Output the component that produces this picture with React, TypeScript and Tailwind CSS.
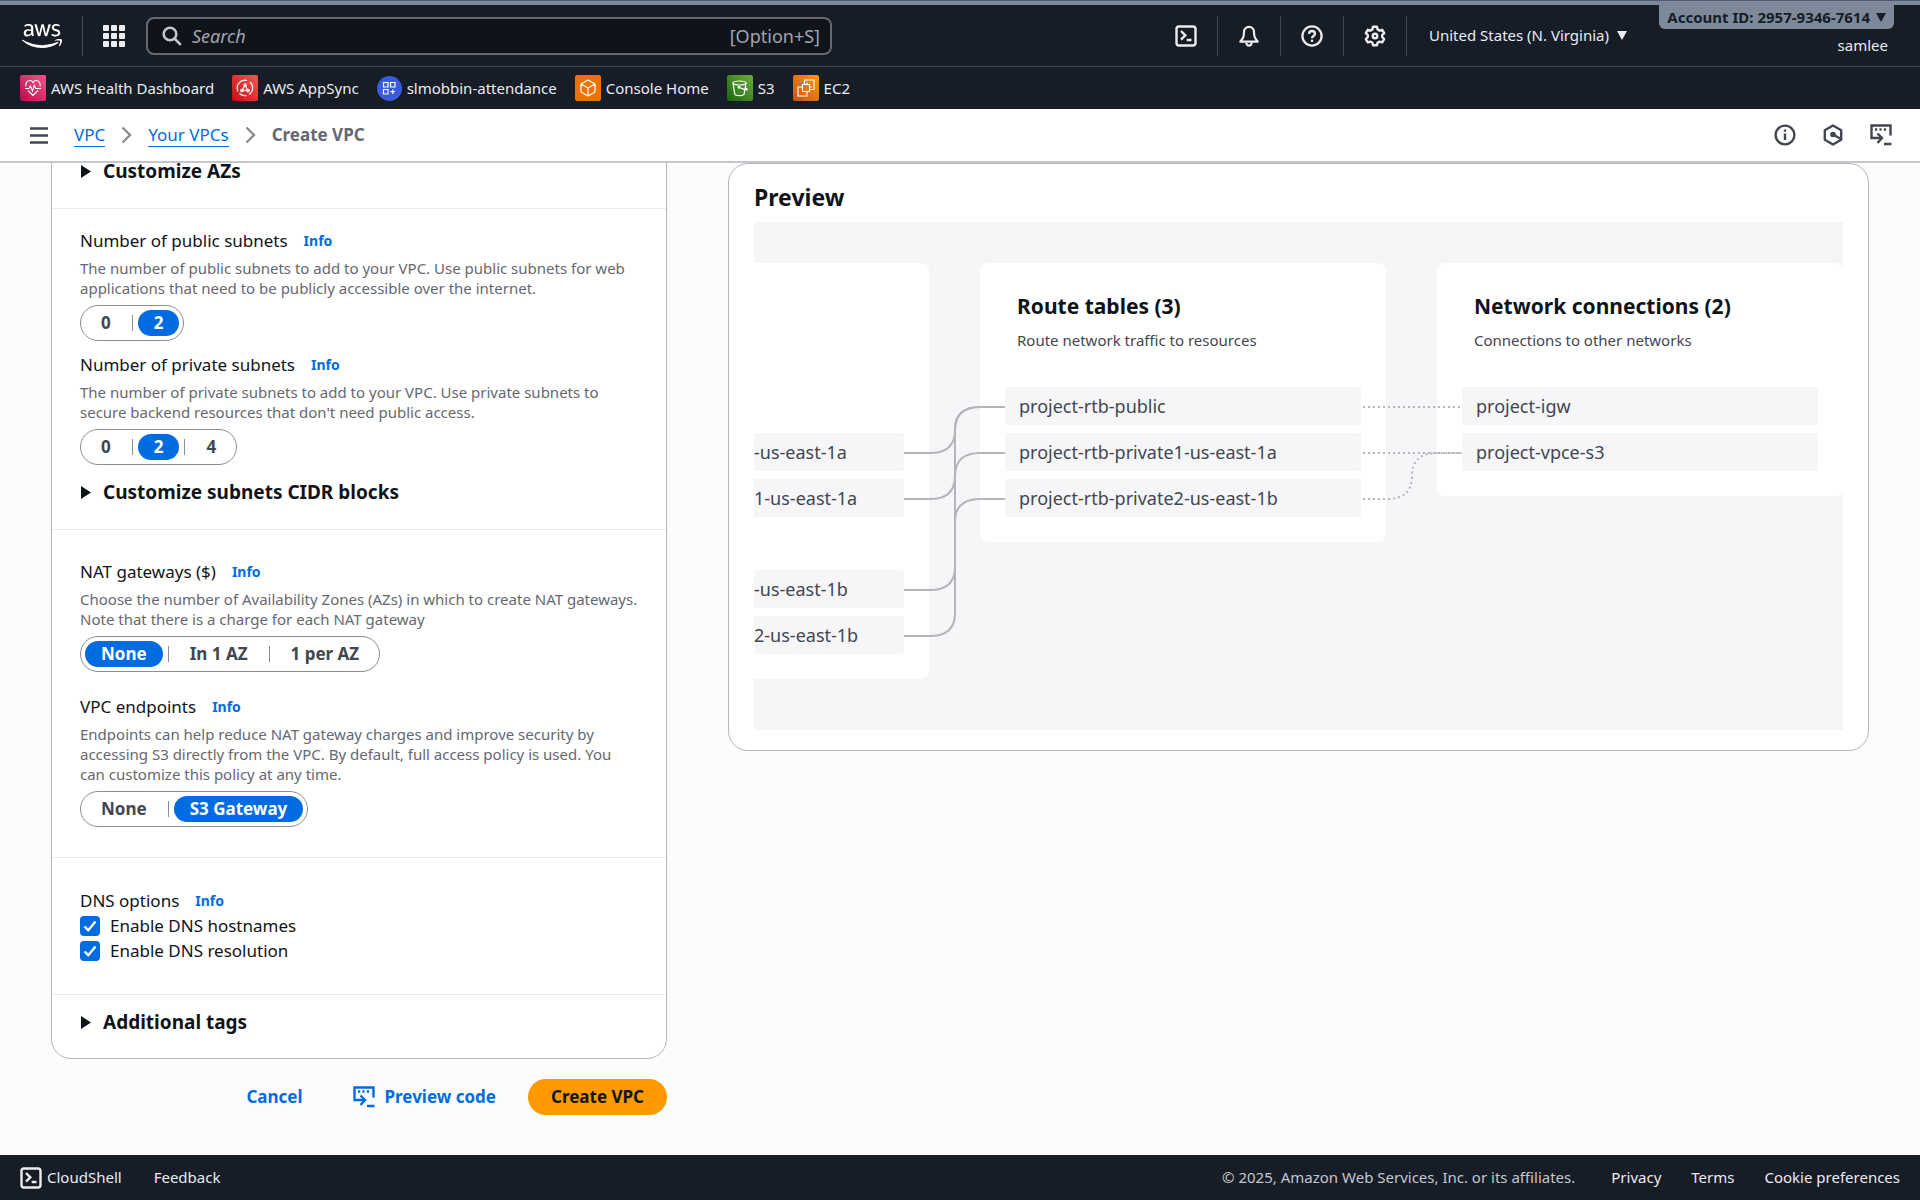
import type { ReactNode } from 'react';
import { FaAws } from 'react-icons/fa';

const favorites = [
  { name: 'AWS Health Dashboard', icon: <HealthIcon /> },
  { name: 'AWS AppSync', icon: <AppSyncIcon /> },
  { name: 'slmobbin-attendance', icon: <ApplicationIcon /> },
  { name: 'Console Home', icon: <ConsoleHomeIcon /> },
  { name: 'S3', icon: <S3Icon /> },
  { name: 'EC2', icon: <Ec2Icon /> },
];

function HealthIcon() {
  return (
    <span className="flex h-[26px] w-[26px] items-center justify-center rounded-xs bg-linear-to-tr from-[#b0084d] to-[#ff4f8b]">
      <svg width="20" height="20" viewBox="0 0 20 20" fill="none" stroke="#fff" strokeWidth="1.1" aria-hidden="true">
        <path d="M3 8.5C2 5 4.5 2.5 7 2.5c1.4 0 2.4.8 3 2 .6-1.2 1.6-2 3-2 2.5 0 5 2.5 4 6M5 12.5l5 5 5-5" />
        <path d="M2 10.5h4l1.5-2.5 2 5 1.8-6 1.5 3.5H18" />
      </svg>
    </span>
  );
}

function AppSyncIcon() {
  return (
    <span className="flex h-[26px] w-[26px] items-center justify-center rounded-xs bg-linear-to-tr from-[#bd0816] to-[#ff5252]">
      <svg width="20" height="20" viewBox="0 0 20 20" fill="none" stroke="#fff" strokeWidth="1.1" aria-hidden="true">
        <path d="M3 13.5A7.8 7.8 0 0 1 12 2.5M15 4a7.8 7.8 0 0 1-1 12.5M11.5 17.6A7.8 7.8 0 0 1 4.5 15.5" />
        <path d="M10 7.5l-3 4.7h6z" />
        <circle cx="10" cy="7" r="1.3" />
        <circle cx="7" cy="12.5" r="1.3" />
        <circle cx="13" cy="12.5" r="1.3" />
      </svg>
    </span>
  );
}

function ApplicationIcon() {
  return (
    <span className="flex h-[25px] w-[25px] items-center justify-center rounded-full bg-[#3b5bdf]">
      <svg width="15" height="15" viewBox="0 0 15 15" fill="none" stroke="#fff" strokeWidth="1.2" aria-hidden="true">
        <path d="M1.5 1.5h4.5v4.5H1.5zM8.5 1.5H13v4.5H8.5zM1.5 8.5h4.5V13H1.5zM10.7 8.5V13M8.5 10.7H13" />
      </svg>
    </span>
  );
}

function ConsoleHomeIcon() {
  return (
    <span className="flex h-[26px] w-[26px] items-center justify-center rounded-xs bg-[#ed7100]">
      <svg width="20" height="20" viewBox="0 0 20 20" fill="none" stroke="#fff" strokeWidth="1.2" strokeLinejoin="round" aria-hidden="true">
        <path d="M10 2l7 4v8l-7 4-7-4V6zM3 6l7 4 7-4M10 10v8" />
      </svg>
    </span>
  );
}

function S3Icon() {
  return (
    <span className="flex h-[26px] w-[26px] items-center justify-center rounded-xs bg-linear-to-tr from-[#1b660f] to-[#6cae3e]">
      <svg width="20" height="20" viewBox="0 0 20 20" fill="none" stroke="#fff" strokeWidth="1.2" aria-hidden="true">
        <ellipse cx="9.5" cy="5" rx="6.5" ry="2" />
        <path d="M3 5l1.8 11.2c.3 1 2.5 1.5 4.7 1.5s4.3-.5 4.6-1.5L16 5M9.5 9.5c3 1.5 5.5 2.2 7.5 2.2.8 0 .3-1-1.6-1.9" />
        <circle cx="9" cy="9.3" r=".8" />
      </svg>
    </span>
  );
}

function Ec2Icon() {
  return (
    <span className="flex h-[26px] w-[26px] items-center justify-center rounded-xs bg-linear-to-tr from-[#c8511b] to-[#ff9900]">
      <svg width="20" height="20" viewBox="0 0 20 20" fill="none" stroke="#fff" strokeWidth="1.1" aria-hidden="true">
        <path d="M6.5 6.5h7v7h-7zM8.5 6.5V2h9.5v9.5h-4.5M6 9H2v9h9v-4M11 4.5v2M13.5 9h2M6.5 9h-2M11 13.5v2" />
      </svg>
    </span>
  );
}

function CloudShellIcon() {
  return (
    <svg width="22" height="22" viewBox="0 0 22 22" fill="none" stroke="currentColor" strokeWidth="2.4" aria-hidden="true">
      <rect x="1.5" y="1.5" width="19" height="19" rx="2.5" />
      <path d="M6 6l4.300 4.300L6 14.600M11.700 15H16.500" />
    </svg>
  );
}

function BellIcon() {
  return (
    <svg width="22" height="22" viewBox="0 0 22 22" fill="none" stroke="currentColor" strokeWidth="2.2" strokeLinejoin="round" aria-hidden="true">
      <path d="M11 1.800a5 5 0 0 1 5 5c0 5.200 1 6.200 3.700 9.900H2.300C5 13 6 12 6 6.800a5 5 0 0 1 5-5z" />
      <path d="M8.300 17.500a2.700 3.200 0 0 0 5.400 0" />
    </svg>
  );
}

function HelpIcon() {
  return (
    <svg width="22" height="22" viewBox="0 0 22 22" fill="none" stroke="currentColor" strokeWidth="2.3" aria-hidden="true">
      <circle cx="11" cy="11" r="9.6" />
      <path d="M8 8.800A3 3 0 0 1 11 6c1.700 0 3 1.100 3 2.700C14 11 11 11 11 13.300" />
      <path d="M11 14.700v2.300" />
    </svg>
  );
}

function GearIcon() {
  return (
    <svg width="22" height="22" viewBox="0 0 22 22" fill="none" stroke="currentColor" strokeWidth="2.4" strokeLinejoin="round" aria-hidden="true">
      <path d="M9 1.800h4l.6 2.600 2 1.200 2.600-.8 2 3.400-2 1.900v2l2 1.900-2 3.400-2.600-.8-2 1.200-.6 2.500H9l-.6-2.500-2-1.200-2.600.8-2-3.400 2-1.900v-2l-2-1.900 2-3.400 2.600.8 2-1.200z" />
      <circle cx="11" cy="11" r="2.3" />
    </svg>
  );
}

function InfoIcon() {
  return (
    <svg width="22" height="22" viewBox="0 0 22 22" fill="none" stroke="currentColor" strokeWidth="2.4" aria-hidden="true">
      <circle cx="11" cy="11" r="9.4" />
      <path d="M11 9.500v6.500M11 5.500v2.300" />
    </svg>
  );
}

function HexagonIcon() {
  return (
    <svg width="22" height="22" viewBox="0 0 22 22" fill="none" stroke="currentColor" strokeWidth="2.4" strokeLinejoin="round" aria-hidden="true">
      <path d="M11 1.500l8.200 4.700v9.600L11 20.500l-8.200-4.700V6.200z" />
      <circle cx="11" cy="10.5" r="2.8" fill="currentColor" stroke="none" />
      <path d="M11 10.500l8 4.500" />
    </svg>
  );
}

function CodeIcon() {
  return (
    <svg width="22" height="22" viewBox="0 0 22 22" fill="none" stroke="currentColor" strokeWidth="2.4" aria-hidden="true">
      <path d="M20.500 11.500V1.500h-19V14H11M5 5.500h2.200M9.400 5.500h2.200M13.800 5.500h2.200" />
      <path d="M7.500 9.500L12 14l-4.500 5M14 20h7.500" />
    </svg>
  );
}

function SearchIcon() {
  return (
    <svg width="20" height="20" viewBox="0 0 20 20" fill="none" stroke="#c6c6cd" strokeWidth="2.6" aria-hidden="true">
      <circle cx="8" cy="8" r="6.3" />
      <path d="M12.500 12.500l6.300 6.300" />
    </svg>
  );
}

function Chevron() {
  return (
    <svg width="11" height="18" viewBox="0 0 11 18" fill="none" stroke="#8c8c94" strokeWidth="2.4" aria-hidden="true">
      <path d="M1.500 1.500L9 9l-7.500 7.500" />
    </svg>
  );
}

function CaretDown() {
  return (
    <svg width="10" height="9" viewBox="0 0 10 9" fill="currentColor" aria-hidden="true">
      <path d="M0 0h10L5 9z" />
    </svg>
  );
}

function Expander({ title }: { title: string }) {
  return (
    <button type="button" aria-expanded="false" className="flex items-center gap-3 text-[19px] leading-[30px] font-bold text-[#0f141a]">
      <svg width="11" height="13" viewBox="0 0 11 13" fill="currentColor" aria-hidden="true">
        <path d="M1 0l10 6.500L1 13z" />
      </svg>
      {title}
    </button>
  );
}

function FieldTitle({ title }: { title: string }) {
  return (
    <div className="flex items-center gap-4">
      <span className="text-[17px] leading-6 text-[#0f141a]">{title}</span>
      <a href="#info" className="text-sm leading-6 font-bold text-[#006ce0]">Info</a>
    </div>
  );
}

function Field({ title, description, children }: { title: string; description: string; children: ReactNode }) {
  return (
    <div>
      <FieldTitle title={title} />
      <p className="-mr-3 pt-[5px] pb-[7px] text-[15px] leading-5 whitespace-pre-line text-[#656871]">{description}</p>
      {children}
    </div>
  );
}

function Segmented({ label, options, selected }: { label: string; options: string[]; selected: string }) {
  return (
    <div role="group" aria-label={label} className="flex h-9 w-fit items-center rounded-full border border-[#8c8c94] px-1">
      {options.map((option, i) => (
        <div key={option} className="flex items-center">
          {i > 0 && <span className="mx-[5px] h-4 w-px bg-[#8c8c94]" />}
          <button
            type="button"
            aria-pressed={option === selected}
            className={`h-[26px] rounded-full px-4 text-[17px] leading-[26px] font-bold ${
              option === selected ? 'bg-[#006ce0] text-white' : 'text-[#424650]'
            }`}
          >
            {option}
          </button>
        </div>
      ))}
    </div>
  );
}

function Checkbox({ label }: { label: string }) {
  return (
    <label className="flex items-center gap-2.5 text-[17px] leading-[25px] text-[#0f141a]">
      <span className="relative flex h-5 w-5">
        <input type="checkbox" defaultChecked className="h-5 w-5 appearance-none rounded-[4px] bg-[#006ce0]" />
        <svg className="pointer-events-none absolute inset-0" width="20" height="20" viewBox="0 0 20 20" fill="none" stroke="#fff" strokeWidth="2.4" aria-hidden="true">
          <path d="M4.500 10.500l3.700 3.700L15.500 5.500" />
        </svg>
      </span>
      {label}
    </label>
  );
}

function ResourceRow({ name }: { name: string }) {
  return <li className="h-[38px] rounded-xs bg-[#f6f6f9] px-3.5 text-lg leading-[38px] text-[#424650]">{name}</li>;
}

function ResourceCard({ title, description, resources }: { title: string; description: string; resources: string[] }) {
  return (
    <div className="w-[406px] shrink-0 rounded-lg bg-white px-[25px] pt-[29px] pb-[25px]">
      <div className="mb-[34px] px-3">
        <h3 className="text-[21px] leading-7 font-bold text-[#0f141a]">{title}</h3>
        <p className="mt-[7px] text-[15px] leading-[26px] text-[#424650]">{description}</p>
      </div>
      <ul className="space-y-2">
        {resources.map(name => (
          <ResourceRow key={name} name={name} />
        ))}
      </ul>
    </div>
  );
}

// Rows of the subnets column, cut off at the left edge of the scrolled preview
function SubnetRow({ name }: { name: string }) {
  return <li className="h-[38px] rounded-r-xs bg-[#f6f6f9] text-lg leading-[38px] text-[#424650]">{name}</li>;
}

function SubnetLinks() {
  return (
    <div className="relative w-[51px] shrink-0">
      <svg className="absolute top-0 -left-[25px]" width="101" height="400" viewBox="0 0 101 400" fill="none" stroke="#b4b4bb" strokeWidth="2" aria-hidden="true">
        <path d="M0 190H26Q51 190 51 167Q51 144 76 144H101" />
        <path d="M0 236H26Q51 236 51 213Q51 190 76 190H101" />
        <path d="M0 327H26Q51 327 51 304V167Q51 144 76 144H101" />
        <path d="M0 373H26Q51 373 51 350V259Q51 236 76 236H101" />
      </svg>
    </div>
  );
}

function NetworkLinks() {
  return (
    <div className="relative w-[51px] shrink-0">
      <svg className="absolute top-0 -left-[25px]" width="101" height="400" viewBox="0 0 101 400" fill="none" stroke="#b4b4bb" strokeWidth="2" strokeDasharray="2 3" aria-hidden="true">
        <path d="M2 144H101" />
        <path d="M2 190H101" />
        <path d="M2 236H26Q51 236 51 213Q51 190 76 190H101" />
      </svg>
    </div>
  );
}

function Header() {
  return (
    <header className="bg-[#161d26] text-[#ebebf0]">
      <div className="h-[5px] border-t border-[#4f5b6e] bg-[#7d8998]" />
      <div className="flex h-[62px] items-center border-b border-[#424650] pr-8">
        <a href="#home" aria-label="AWS" className="ml-[22px] text-white">
          <FaAws className="h-8 w-10" />
        </a>
        <span className="ml-5 h-10 w-px bg-[#424650]" />
        <button type="button" aria-label="Services" className="ml-5">
          <svg width="22" height="22" viewBox="0 0 22 22" fill="currentColor" aria-hidden="true">
            {[0, 8, 16].map(y => [0, 8, 16].map(x => <rect key={`${x}-${y}`} x={x} y={y} width="6" height="6" rx="1" />))}
          </svg>
        </button>
        <div className="ml-[21px] flex h-[38px] w-[686px] items-center rounded-lg border-2 border-[#656871] bg-[#0f141a] px-3.5">
          <SearchIcon />
          <input
            type="text"
            aria-label="Search"
            placeholder="Search"
            className="ml-2.5 min-w-0 flex-1 bg-transparent text-lg outline-none placeholder:text-[#a4a4ad] placeholder:italic"
          />
          <span className="-mr-1 text-lg text-[#a4a4ad]">[Option+S]</span>
        </div>
        <nav className="ml-auto flex items-center">
          <button type="button" aria-label="CloudShell" className="px-5"><CloudShellIcon /></button>
          <span className="h-10 w-px bg-[#424650]" />
          <button type="button" aria-label="Notifications" className="px-5"><BellIcon /></button>
          <span className="h-10 w-px bg-[#424650]" />
          <button type="button" aria-label="Help" className="px-5"><HelpIcon /></button>
          <span className="h-10 w-px bg-[#424650]" />
          <button type="button" aria-label="Settings" className="px-5"><GearIcon /></button>
          <span className="h-10 w-px bg-[#424650]" />
          <button type="button" className="ml-[22px] flex items-center gap-2 text-[15px]">
            United States (N. Virginia)
            <CaretDown />
          </button>
        </nav>
        <div className="ml-[30px] flex h-full w-[231px] flex-col items-end">
          <button type="button" className="-mr-[6px] flex h-6 items-center gap-1.5 rounded-b-md bg-[#7d8998] px-2 text-[15px] font-bold whitespace-nowrap text-[#161d26]">
            Account ID: 2957-9346-7614
            <CaretDown />
          </button>
          <button type="button" className="mt-1.5 text-[15px] leading-5">samlee</button>
        </div>
      </div>
      <nav className="flex h-[42px] items-center gap-[18px] pl-5 text-[15px]">
        {favorites.map(favorite => (
          <a key={favorite.name} href="#favorite" className="flex items-center gap-[5px]">
            {favorite.icon}
            {favorite.name}
          </a>
        ))}
      </nav>
    </header>
  );
}

function Breadcrumbs() {
  return (
    <div className="flex h-[54px] items-center border-b-2 border-[#c6c6cd] bg-white pr-7 pl-[30px] text-[17px] text-[#424650]">
      <button type="button" aria-label="Open navigation">
        <svg width="18" height="17" viewBox="0 0 18 17" stroke="currentColor" strokeWidth="2.4" aria-hidden="true">
          <path d="M0 1.500h18M0 8.500h18M0 15.500h18" />
        </svg>
      </button>
      <nav aria-label="Breadcrumbs" className="ml-[26px] flex items-center gap-4 leading-[22px]">
        <a href="#vpc" className="border-b border-[#006ce0] text-[#006ce0]">VPC</a>
        <Chevron />
        <a href="#vpcs" className="border-b border-[#006ce0] text-[#006ce0]">Your VPCs</a>
        <Chevron />
        <span className="font-bold text-[#656871]">Create VPC</span>
      </nav>
      <div className="ml-auto flex items-center gap-[26px]">
        <button type="button" aria-label="Info"><InfoIcon /></button>
        <button type="button" aria-label="Diagnostics"><HexagonIcon /></button>
        <button type="button" aria-label="Code"><CodeIcon /></button>
      </div>
    </div>
  );
}

export default function App() {
  return (
    <div className="flex min-h-screen flex-col bg-[#fcfcfd] font-['Noto_Sans','Open_Sans',sans-serif]">
      <Header />
      <Breadcrumbs />
      <main className="flex flex-1 items-start gap-[61px] overflow-hidden px-[51px] pb-10">
        <form className="-mt-5 w-[616px] shrink-0" onSubmit={e => e.preventDefault()}>
          <div className="rounded-[20px] border border-[#b4b4bb] bg-white">
            <div className="border-b border-[#ebebf0] px-7 pt-3 pb-[22px]">
              <Expander title="Customize AZs" />
            </div>
            <div className="flex flex-col gap-3 border-b border-[#ebebf0] px-7 pt-5 pb-[22px]">
              <Field
                title="Number of public subnets"
                description={'The number of public subnets to add to your VPC. Use public subnets for web\napplications that need to be publicly accessible over the internet.'}
              >
                <Segmented label="Number of public subnets" options={['0', '2']} selected="2" />
              </Field>
              <Field
                title="Number of private subnets"
                description={"The number of private subnets to add to your VPC. Use private subnets to\nsecure backend resources that don't need public access."}
              >
                <Segmented label="Number of private subnets" options={['0', '2', '4']} selected="2" />
              </Field>
              <Expander title="Customize subnets CIDR blocks" />
            </div>
            <div className="flex flex-col gap-[23px] border-b border-[#ebebf0] px-7 py-[30px]">
              <Field
                title="NAT gateways ($)"
                description={'Choose the number of Availability Zones (AZs) in which to create NAT gateways.\nNote that there is a charge for each NAT gateway'}
              >
                <Segmented label="NAT gateways" options={['None', 'In 1 AZ', '1 per AZ']} selected="None" />
              </Field>
              <Field
                title="VPC endpoints"
                description={'Endpoints can help reduce NAT gateway charges and improve security by\naccessing S3 directly from the VPC. By default, full access policy is used. You\ncan customize this policy at any time.'}
              >
                <Segmented label="VPC endpoints" options={['None', 'S3 Gateway']} selected="S3 Gateway" />
              </Field>
            </div>
            <div className="border-b border-[#ebebf0] px-7 py-[31px]">
              <FieldTitle title="DNS options" />
              <Checkbox label="Enable DNS hostnames" />
              <Checkbox label="Enable DNS resolution" />
            </div>
            <div className="px-7 pt-3 pb-[21px]">
              <Expander title="Additional tags" />
            </div>
          </div>
          <div className="mt-5 flex items-center justify-end text-[17px] font-bold text-[#006ce0]">
            <button type="button">Cancel</button>
            <button type="button" className="ml-[50px] flex items-center gap-2.5">
              <CodeIcon />
              Preview code
            </button>
            <button type="submit" className="ml-8 h-9 rounded-full bg-[#ff9900] px-[23px] text-[#0f141a]">Create VPC</button>
          </div>
        </form>

        <section className="min-w-0 flex-1 rounded-[20px] border border-[#b4b4bb] bg-white px-[25px] pt-[17px] pb-5">
          <h2 className="text-[23px] leading-8 font-bold text-[#0f141a]">Preview</h2>
          <div className="mt-[9px] flex h-[508px] items-start justify-end overflow-hidden bg-[#f6f6f9] pt-[41px]">
            <div className="min-w-0 flex-1 rounded-r-lg bg-white pt-[170px] pr-[25px] pb-[25px]">
              <ul className="space-y-2">
                <SubnetRow name="-us-east-1a" />
                <SubnetRow name="1-us-east-1a" />
              </ul>
              <ul className="mt-[53px] space-y-2">
                <SubnetRow name="-us-east-1b" />
                <SubnetRow name="2-us-east-1b" />
              </ul>
            </div>
            <SubnetLinks />
            <ResourceCard
              title="Route tables (3)"
              description="Route network traffic to resources"
              resources={['project-rtb-public', 'project-rtb-private1-us-east-1a', 'project-rtb-private2-us-east-1b']}
            />
            <NetworkLinks />
            <ResourceCard
              title="Network connections (2)"
              description="Connections to other networks"
              resources={['project-igw', 'project-vpce-s3']}
            />
          </div>
        </section>
      </main>
      <footer className="flex h-[45px] items-center bg-[#161d26] px-5 text-[15px] text-[#ebebf0]">
        <button type="button" className="flex items-center gap-[5px]">
          <CloudShellIcon />
          CloudShell
        </button>
        <a href="#feedback" className="ml-8">Feedback</a>
        <span className="ml-auto text-[#c6c6cd]">© 2025, Amazon Web Services, Inc. or its affiliates.</span>
        <a href="#privacy" className="ml-9">Privacy</a>
        <a href="#terms" className="ml-[30px]">Terms</a>
        <a href="#cookies" className="ml-[30px]">Cookie preferences</a>
      </footer>
    </div>
  );
}
